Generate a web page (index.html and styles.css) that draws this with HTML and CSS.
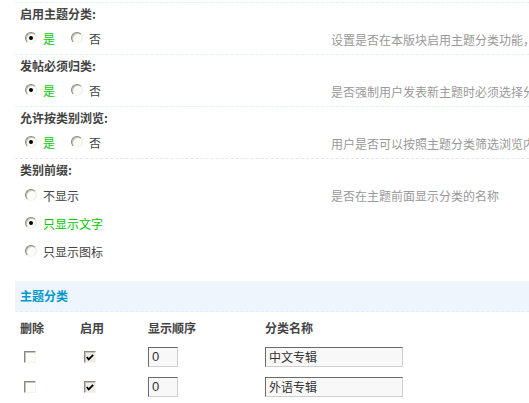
FILE: index.html
```html
<!DOCTYPE html>
<html lang="zh-CN">
<head>
<meta charset="utf-8">
<title>主题分类</title>
<link rel="stylesheet" href="styles.css">
</head>
<body>
<div class="page">
  <section class="opt">
    <div class="opt-title">启用主题分类:</div>
    <div class="opt-body">
      <div class="choices">
        <label class="choice on"><span class="radio checked"></span>是</label>
        <label class="choice"><span class="radio"></span>否</label>
      </div>
      <div class="desc">设置是否在本版块启用主题分类功能，您需要同时设定相应的分类选项，才能启用本功能</div>
    </div>
  </section>
  <section class="opt">
    <div class="opt-title">发帖必须归类:</div>
    <div class="opt-body">
      <div class="choices">
        <label class="choice on"><span class="radio checked"></span>是</label>
        <label class="choice"><span class="radio"></span>否</label>
      </div>
      <div class="desc">是否强制用户发表新主题时必须选择分类</div>
    </div>
  </section>
  <section class="opt">
    <div class="opt-title">允许按类别浏览:</div>
    <div class="opt-body">
      <div class="choices">
        <label class="choice on"><span class="radio checked"></span>是</label>
        <label class="choice"><span class="radio"></span>否</label>
      </div>
      <div class="desc">用户是否可以按照主题分类筛选浏览内容</div>
    </div>
  </section>
  <section class="opt opt-gray">
    <div class="opt-title">类别前缀:</div>
    <div class="opt-body">
      <div class="choices vertical">
        <label class="choice"><span class="radio"></span>不显示</label>
        <label class="choice on"><span class="radio checked"></span>只显示文字</label>
        <label class="choice"><span class="radio"></span>只显示图标</label>
      </div>
      <div class="desc">是否在主题前面显示分类的名称</div>
    </div>
  </section>

  <div class="band">主题分类</div>
  <div class="grid">
    <div class="th">删除</div>
    <div class="th">启用</div>
    <div class="th">显示顺序</div>
    <div class="th">分类名称</div>

    <div class="td"><span class="check"></span></div>
    <div class="td"><span class="check checked"><svg viewBox="0 0 11 11" width="11" height="11"><polyline points="2,5 4,7.5 9,2.5" fill="none" stroke="#000" stroke-width="2"/></svg></span></div>
    <div class="td"><span class="field num">0</span></div>
    <div class="td"><span class="field name">中文专辑</span></div>

    <div class="td"><span class="check"></span></div>
    <div class="td"><span class="check checked"><svg viewBox="0 0 11 11" width="11" height="11"><polyline points="2,5 4,7.5 9,2.5" fill="none" stroke="#000" stroke-width="2"/></svg></span></div>
    <div class="td"><span class="field num">0</span></div>
    <div class="td"><span class="field name">外语专辑</span></div>
  </div>
</div>
</body>
</html>
```
FILE: styles.css
```css
html, body {
  margin: 0;
  padding: 0;
  background: #fff;
  overflow: hidden;
}
body {
  font-family: "Noto Sans CJK SC", "Liberation Sans", sans-serif;
  font-size: 12px;
  color: #444;
}
.page {
  padding: 2px 0 0 15px;
  width: 700px;
  white-space: nowrap;
}
.opt {
  border-top: 1px dashed #deeffb;
  padding-bottom: 3px;
}
.opt-gray {
  border-top-color: #e3e5e8;
}
.opt-title {
  height: 22px;
  line-height: 22px;
  padding-left: 5px;
  font-weight: bold;
  color: #444;
}
.opt-body {
  display: grid;
  grid-template-columns: 316px 1fr;
  align-items: start;
}
.choices {
  display: flex;
  align-items: center;
  gap: 16px;
  padding-left: 10px;
  height: 26px;
}
.choices.vertical {
  flex-direction: column;
  align-items: flex-start;
  gap: 0;
  height: auto;
}
.choices.vertical .choice {
  height: 28px;
}
.choice {
  display: flex;
  align-items: center;
  gap: 6px;
  color: #444;
}
.choice.on {
  color: #00cc00;
}
.radio {
  display: inline-block;
  position: relative;
  box-sizing: border-box;
  width: 12px;
  height: 12px;
  border-radius: 50%;
  border: 1px solid;
  border-color: #8a877e #ecebe3 #f4f3ec #8a877e;
  box-shadow: inset 1px 1px 0 #c6c3b8;
  background: #fbfbf7;
}
.radio.checked::after {
  content: "";
  position: absolute;
  left: 3px;
  top: 3px;
  width: 4px;
  height: 4px;
  border-radius: 50%;
  background: #000;
}
.desc {
  color: #999;
  line-height: 22px;
  padding-top: 4px;
}
.band {
  margin-top: 13px;
  height: 30px;
  line-height: 30px;
  padding-left: 5px;
  background: #eef5fc;
  border-bottom: 1px dashed #deeffb;
  color: #0099cc;
  font-weight: bold;
}
.grid {
  display: grid;
  grid-template-columns: 60px 68px 117px 1fr;
  grid-auto-rows: 30px;
}
.th {
  font-weight: bold;
  color: #444;
  padding-left: 5px;
  display: flex;
  align-items: center;
}
.td {
  padding-left: 5px;
  display: flex;
  align-items: center;
}
.check {
  display: inline-flex;
  align-items: center;
  justify-content: center;
  box-sizing: border-box;
  width: 12px;
  height: 12px;
  margin-left: 4px;
  border: 1px solid;
  border-color: #8a877e #f4f3ec #f4f3ec #8a877e;
  box-shadow: inset 1px 1px 0 #c6c3b8;
  background: #fcfcf9;
}
.check.checked {
  background: #eeede6;
}
.field {
  display: inline-block;
  box-sizing: border-box;
  height: 20px;
  line-height: 18px;
  padding-left: 3px;
  border: 1px solid;
  border-color: #6a6a6a #cfcfcf #cfcfcf #6a6a6a;
  background: #f8f8f8;
  color: #333;
  font-size: 12px;
}
.num {
  width: 30px;
  font-family: "Liberation Sans", sans-serif;
  font-size: 13px;
}
.name {
  width: 138px;
}
```
